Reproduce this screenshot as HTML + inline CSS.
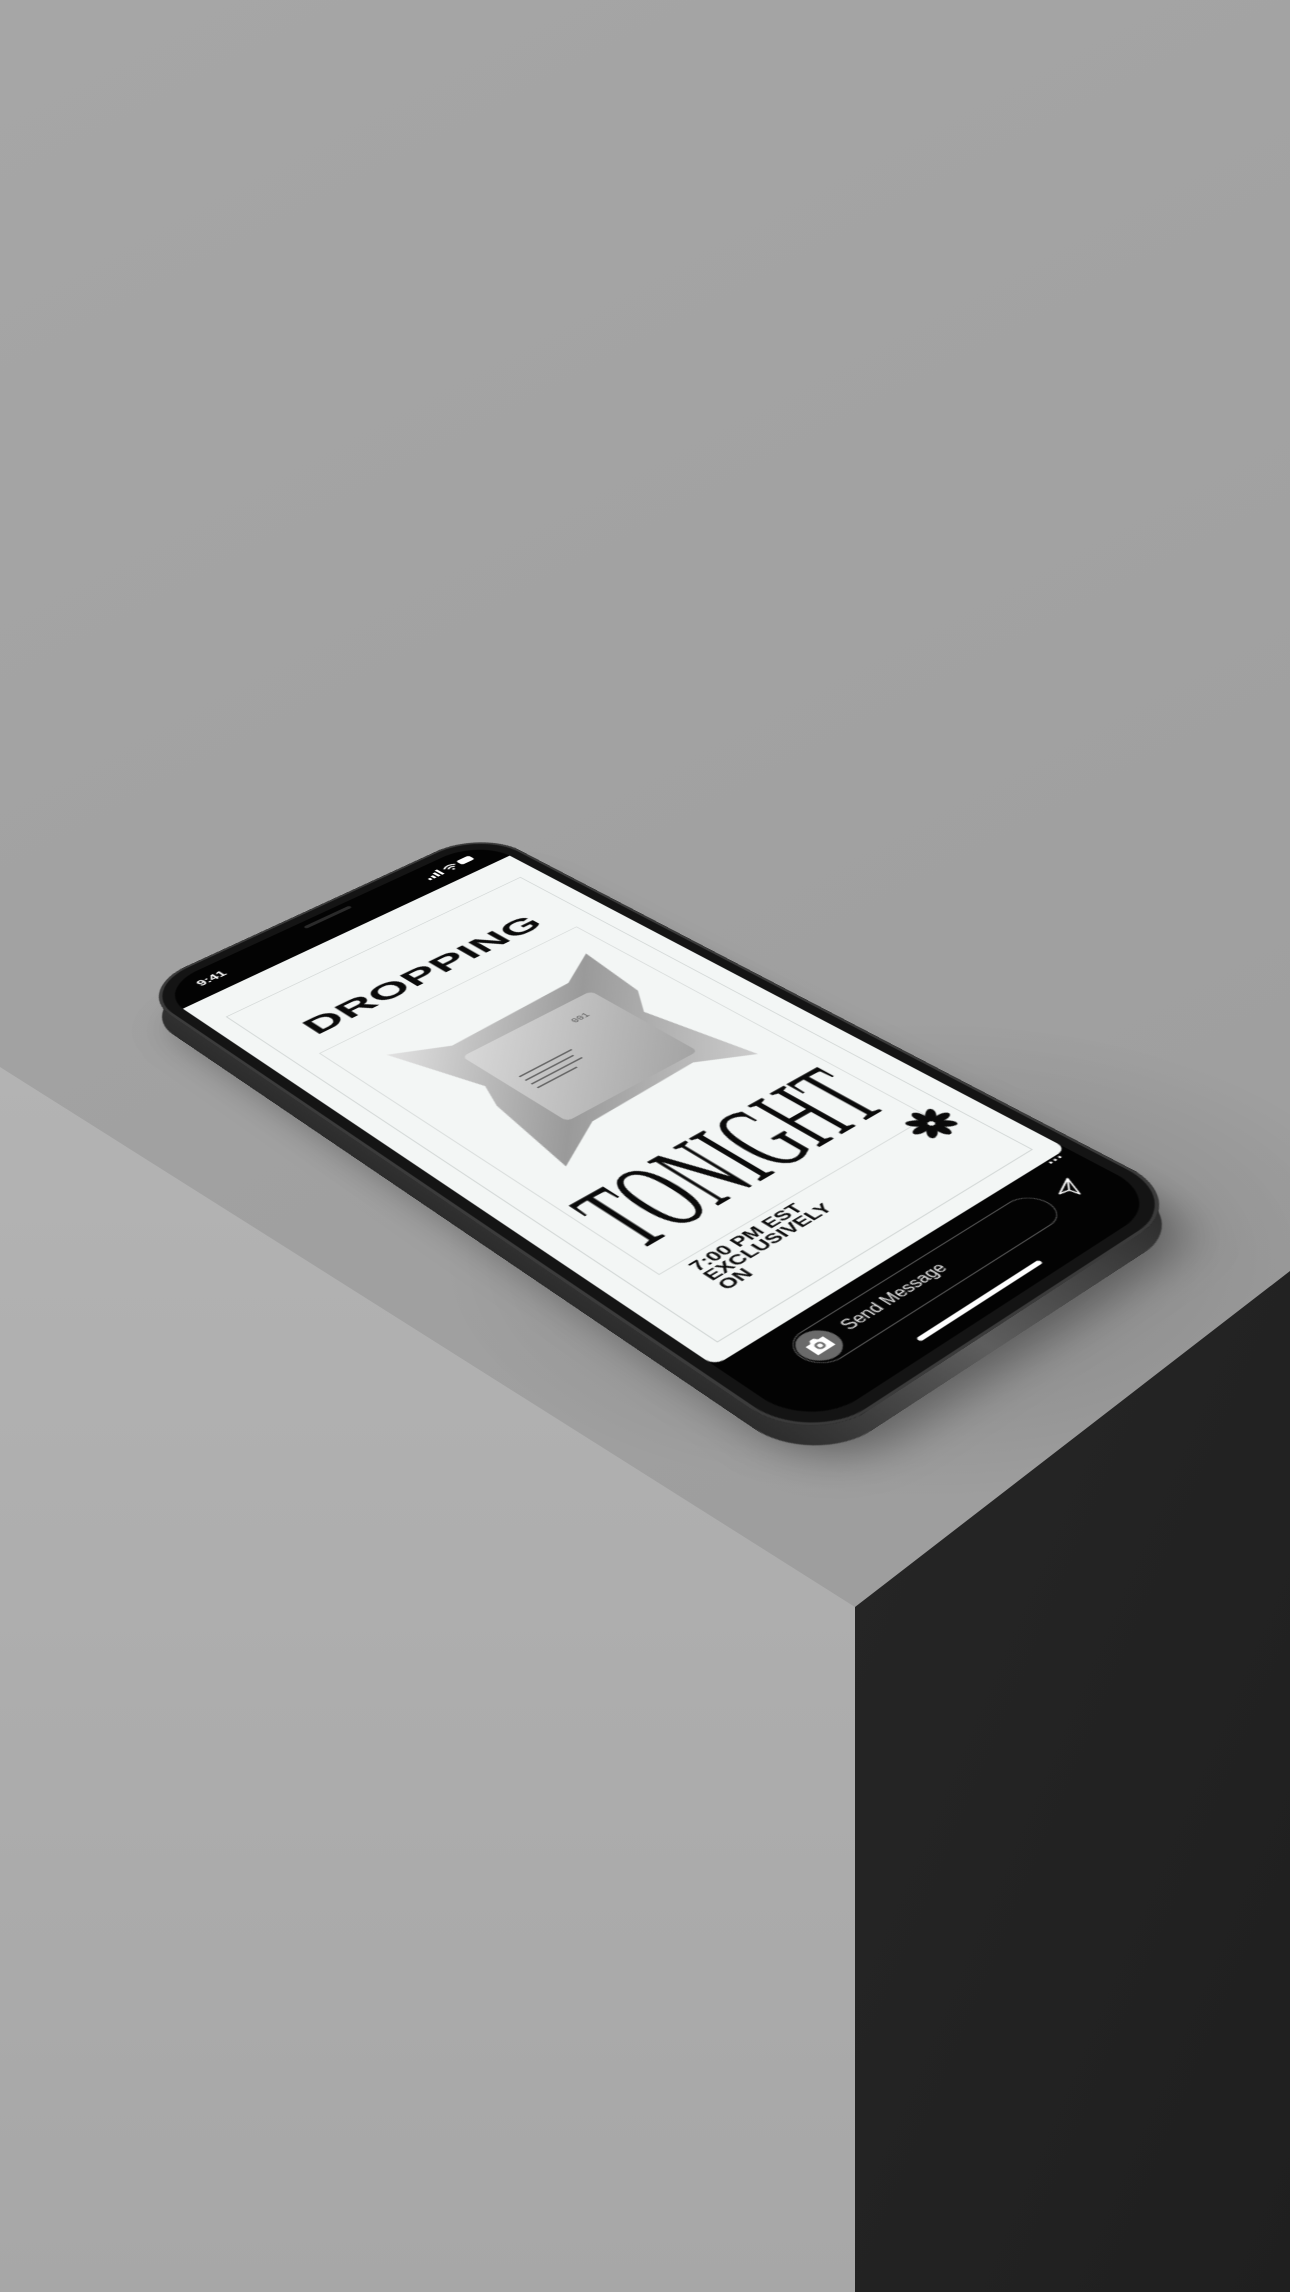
<!DOCTYPE html>
<html><head><meta charset="utf-8"><style>
html,body{margin:0;padding:0;width:1290px;height:2292px;overflow:hidden;background:#a3a3a3;}
.bg{position:absolute;left:0;top:0;}
.ph{position:absolute;left:0;top:0;width:390px;height:844px;transform-origin:0 0;}
.m{transform:matrix3d(0.92607,-0.22233,0,0.00019320, 0.55543,0.13182,0,-0.00027239, 0,0,1,0, 155,990,0,1);}
.sh{transform:translate(22px,30px) matrix3d(0.92607,-0.22233,0,0.00019320, 0.55543,0.13182,0,-0.00027239, 0,0,1,0, 155,990,0,1);}
.sd{transform:translate(3px,20px) matrix3d(0.92607,-0.22233,0,0.00019320, 0.55543,0.13182,0,-0.00027239, 0,0,1,0, 155,990,0,1);}
.a{position:absolute;}
.f{font-family:"Liberation Sans",sans-serif;}
</style></head><body>
<svg class="bg" width="1290" height="2292" viewBox="0 0 1290 2292">
<defs>
<linearGradient id="wall" x1="0" y1="0" x2="0.3" y2="1"><stop offset="0" stop-color="#a6a6a6"/><stop offset="1" stop-color="#9c9c9c"/></linearGradient>
<linearGradient id="lf" x1="0" y1="0" x2="0" y2="1"><stop offset="0" stop-color="#b3b3b3"/><stop offset="1" stop-color="#a7a7a7"/></linearGradient>
<linearGradient id="rf" x1="0" y1="0" x2="1" y2="1"><stop offset="0" stop-color="#262626"/><stop offset="1" stop-color="#1f1f1f"/></linearGradient>
<radialGradient id="shd" cx="0.5" cy="0.5" r="0.5"><stop offset="0" stop-color="#000" stop-opacity="0.16"/><stop offset="1" stop-color="#000" stop-opacity="0"/></radialGradient>
</defs>
<rect width="1290" height="2292" fill="url(#wall)"/>
<ellipse cx="920" cy="1260" rx="480" ry="240" fill="url(#shd)"/>
<polygon points="0,1067 855,1607 855,2292 0,2292" fill="url(#lf)"/>
<polygon points="855,1607 1290,1271 1290,2292 855,2292" fill="url(#rf)"/>
</svg>

<div class="ph sh"><div class="a" style="left:-14px;top:-14px;width:418px;height:872px;border-radius:60px;background:rgba(0,0,0,.35);filter:blur(20px);"></div></div>
<div class="ph sd"><div class="a" style="left:-14px;top:-14px;width:418px;height:872px;border-radius:60px;background:linear-gradient(90deg,#2c2c2c,#5e5e5e 45%,#2a2a2a);"></div></div>
<div class="ph m">
 <div class="a" style="left:-14px;top:-14px;width:418px;height:872px;border-radius:60px;background:#141414;box-shadow:inset 0 0 0 3px #3b3b3b;"></div>
 <div class="a" style="left:0;top:0;width:390px;height:844px;border-radius:48px;background:#030303;overflow:hidden;">
  <div class="a f" style="left:34px;top:13px;color:#fff;font-size:15px;font-weight:bold;">9:41</div>
  <div class="a" style="left:165px;top:8px;width:55px;height:5px;border-radius:3px;background:#2a2a2a;"></div>
  <svg class="a" style="left:305px;top:14px" width="60" height="14" viewBox="0 0 60 14">
   <rect x="0" y="9" width="3" height="4" fill="#fff"/><rect x="5" y="7" width="3" height="6" fill="#fff"/><rect x="10" y="4" width="3" height="9" fill="#fff"/><rect x="15" y="1" width="3" height="12" fill="#fff"/>
   <path d="M23 6 Q30 0 37 6 M26 9 Q30 5 34 9" stroke="#fff" stroke-width="2" fill="none"/><circle cx="30" cy="12" r="1.5" fill="#fff"/>
   <rect x="41" y="2" width="16" height="10" rx="3" fill="#fff"/>
  </svg>
  <div class="a" style="left:0;top:46px;width:390px;height:700px;background:#f3f6f5;border-radius:0 0 10px 10px;overflow:hidden;">
   <div class="a" style="left:20px;top:40px;width:348px;height:640px;border:1px solid #cfd4d3;"></div>
   <div class="a" style="left:44px;top:150px;width:300px;height:440px;border:1px solid #d6dad9;"></div>
   <div class="a f" style="left:60px;top:92px;font-size:38px;font-weight:bold;color:#0a0a0a;transform:scaleX(1.3);transform-origin:0 0;letter-spacing:0.5px;">DROPPING</div>
   <svg class="a" style="left:75px;top:185px" width="260" height="260" viewBox="0 0 260 260">
    <defs><linearGradient id="fo" x1="0" y1="0" x2="1" y2="1"><stop offset="0" stop-color="#e2e2e2"/><stop offset=".5" stop-color="#9a9a9a"/><stop offset="1" stop-color="#cfcfcf"/></linearGradient>
    <linearGradient id="bx" x1="0" y1="0" x2="1" y2="1"><stop offset="0" stop-color="#d8d8d8"/><stop offset="1" stop-color="#a3a3a3"/></linearGradient></defs>
    <path d="M10 10 L60 40 L200 35 L245 8 L235 90 L215 120 L238 240 L190 210 L70 215 L12 248 L28 140 L40 110 Z" fill="url(#fo)"/>
    <rect x="55" y="60" width="150" height="140" rx="6" fill="url(#bx)"/>
    <path d="M70 120 h60 M70 128 h55 M70 136 h58 M70 144 h45" stroke="#666" stroke-width="2"/>
    <text x="160" y="90" font-family="Liberation Mono" font-size="10" fill="#555">001</text>
   </svg>
   <div class="a" style="left:52px;top:452px;font-family:'Liberation Serif',serif;font-size:128px;line-height:128px;color:#0a0a0a;transform:scaleX(0.5);transform-origin:0 0;">TONIGHT</div>
   <div class="a f" style="left:68px;top:598px;font-size:16px;line-height:16px;font-weight:bold;color:#0a0a0a;transform:scaleX(1.2);transform-origin:0 0;">7:00 PM EST<br>EXCLUSIVELY<br>ON</div>
   <svg class="a" style="left:318px;top:578px" width="44" height="44" viewBox="-24 -24 48 48">
    <g fill="#0a0a0a">
     <ellipse cx="0" cy="-13" rx="5" ry="10"/><ellipse cx="0" cy="13" rx="5" ry="10"/>
     <ellipse cx="13" cy="0" rx="10" ry="5"/><ellipse cx="-13" cy="0" rx="10" ry="5"/>
     <ellipse cx="0" cy="-13" rx="5" ry="10" transform="rotate(45)"/><ellipse cx="0" cy="13" rx="5" ry="10" transform="rotate(45)"/>
     <ellipse cx="13" cy="0" rx="10" ry="5" transform="rotate(45)"/><ellipse cx="-13" cy="0" rx="10" ry="5" transform="rotate(45)"/>
    </g>
   </svg>
  </div>
  <div class="a" style="left:52px;top:762px;width:270px;height:40px;border:1px solid #5a5a5a;border-radius:21px;"></div>
  <div class="a" style="left:54px;top:765px;width:35px;height:35px;border-radius:50%;background:#6a6a6a;"></div>
  <svg class="a" style="left:61px;top:772px" width="22" height="20" viewBox="0 0 22 20"><path d="M2 5 h5 l2-3 h4 l2 3 h5 v13 h-18 z" fill="#fff"/><circle cx="11" cy="11" r="4" fill="#6a6a6a"/><circle cx="11" cy="11" r="2.2" fill="#fff"/></svg>
  <div class="a f" style="left:100px;top:773px;font-size:16px;color:#e6e6e6;">Send Message</div>
  <svg class="a" style="left:336px;top:770px" width="26" height="26" viewBox="0 0 26 26"><path d="M3 12 L23 3 L14 23 L12 14 Z M12 14 L23 3" stroke="#fff" stroke-width="1.5" fill="none" stroke-linejoin="round"/></svg>
  <div class="a f" style="left:364px;top:742px;color:#fff;font-size:16px;font-weight:bold;">···</div>
  <div class="a" style="left:128px;top:826px;width:135px;height:5px;border-radius:3px;background:#fff;"></div>
 </div>
</div>
</body></html>
